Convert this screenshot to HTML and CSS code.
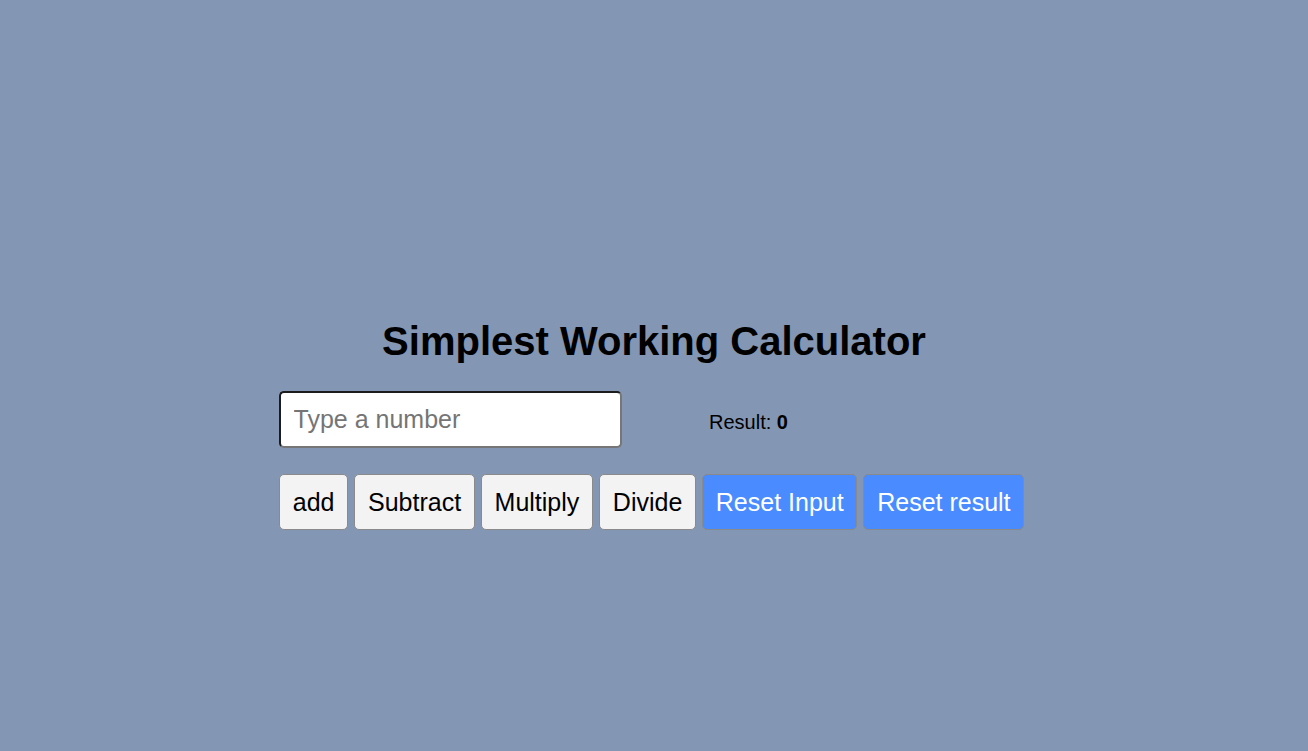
FILE: index.html
```html
<!DOCTYPE html>
<html lang="en">
<head>
<meta charset="utf-8">
<title>Simplest Working Calculator</title>
<link rel="stylesheet" href="styles.css">
</head>
<body>
<main class="calc">
  <h1 class="title">Simplest Working Calculator</h1>
  <div class="input-row">
    <input class="num-input" type="number" placeholder="Type a number">
    <p class="result">Result: <b>0</b></p>
  </div>
  <div class="btn-row">
    <button class="btn">add</button>
    <button class="btn">Subtract</button>
    <button class="btn">Multiply</button>
    <button class="btn">Divide</button>
    <button class="btn btn-blue">Reset Input</button>
    <button class="btn btn-blue">Reset result</button>
  </div>
</main>
</body>
</html>
```

FILE: styles.css
```css
html, body {
  margin: 0;
  height: 100%;
}
body {
  background: #8396b3;
  font-family: "Liberation Sans", Arial, sans-serif;
  color: #000;
}
.calc {
  width: 750px;
  margin: 0 auto;
  padding-top: 318px;
}
.title {
  margin: 0 0 27px;
  font-size: 40px;
  font-weight: bold;
  line-height: 46px;
  text-align: center;
}
.input-row {
  display: flex;
  align-items: center;
}
.num-input {
  box-sizing: border-box;
  width: 343px;
  height: 57px;
  padding: 0 12.5px;
  font-family: "Liberation Sans", Arial, sans-serif;
  font-size: 25px;
  background: #fff;
  border: 2px solid;
  border-color: #1c1c1c #767676 #767676 #1c1c1c;
  border-radius: 5px;
  outline: none;
  -moz-appearance: textfield;
}
.num-input::placeholder {
  color: #757575;
}
.num-input::-webkit-inner-spin-button,
.num-input::-webkit-outer-spin-button {
  -webkit-appearance: none;
  margin: 0;
}
.result {
  margin: 6px 0 0 87px;
  font-size: 20px;
}
.btn-row {
  display: flex;
  gap: 6px;
  margin-top: 26px;
}
.btn {
  font-family: "Liberation Sans", Arial, sans-serif;
  font-size: 25px;
  padding: 12.5px 12.75px;
  line-height: 29px;
  background: #f3f3f3;
  color: #000;
  border: 1px solid #8a8a8a;
  border-radius: 5px;
}
.btn-blue {
  background: #4a8cff;
  color: #fff;
}
```
